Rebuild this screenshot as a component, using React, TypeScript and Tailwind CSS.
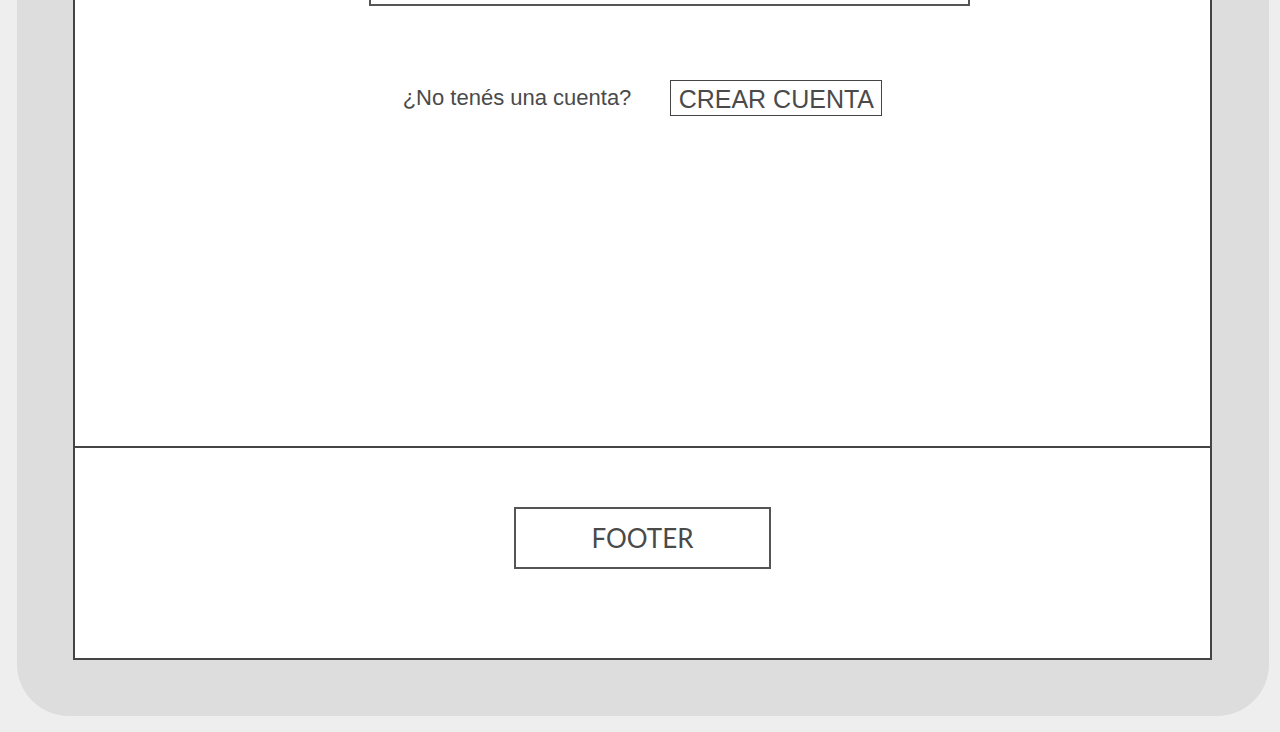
import React from "react";

export default function App() {
  return (
    <div className="h-[732px] w-[1280px] overflow-hidden bg-[#eeeeee] pl-[17px] pr-[11px]" style={{ fontFamily: '"Liberation Sans", Arial, sans-serif' }}>
      <div className="h-[716px] rounded-b-[52px] bg-[#dddddd] pl-[56px] pr-[57px]">
        <div className="flex h-[660px] flex-col border-x-2 border-b-2 border-[#444444] bg-white">
          <div className="flex h-[448px] flex-col border-b-2 border-[#444444]">
            <div className="ml-[294px] h-[6px] w-[601px] border-x-2 border-b-2 border-[#555555]" />
            <div className="mt-[74px] flex items-center justify-center">
              <span className="text-[22px] leading-none text-[#4a4a4a]">¿No tenés una cuenta?</span>
              <div className="ml-[39px] flex h-[36px] w-[212px] items-center justify-center border-[1.5px] border-[#444444] text-[25px] leading-none text-[#4a4a4a]">
                <span className="pt-[2px]">CREAR CUENTA</span>
              </div>
            </div>
          </div>
          <div className="flex flex-1 items-start justify-center pt-[59px]">
            <div
              className="flex h-[62px] w-[257px] items-center justify-center border-2 border-[#555555] text-[26px] leading-none text-[#4a4a4a]"
              style={{ fontFamily: 'Lato, sans-serif' }}
            >
              FOOTER
            </div>
          </div>
        </div>
      </div>
    </div>
  );
}
